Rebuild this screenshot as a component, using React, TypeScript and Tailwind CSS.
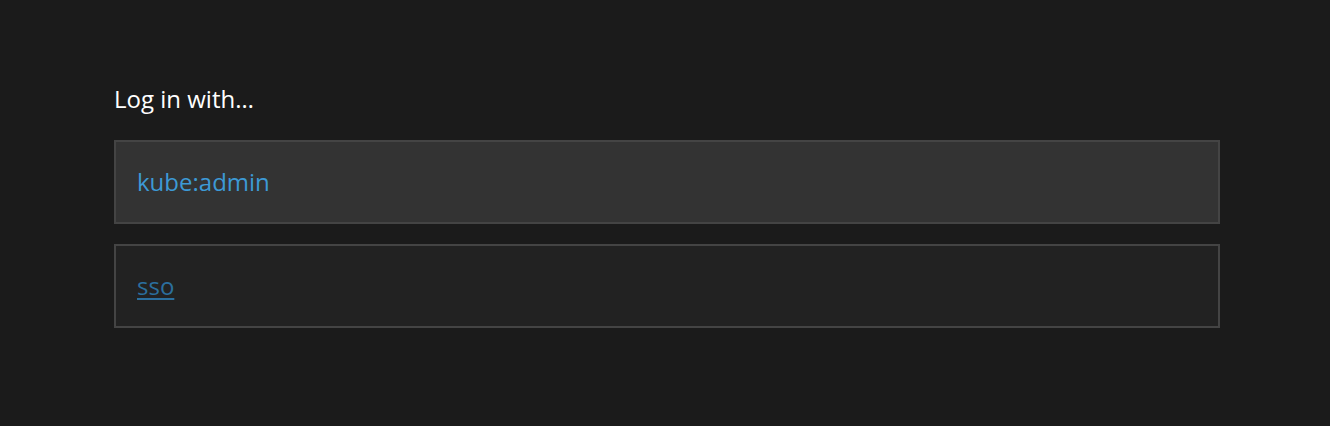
export default function App() {
  return (
    <div className="min-h-[426px] w-full bg-[#1b1b1b] font-['Open_Sans',sans-serif]">
      <div className="ml-[114px] w-[1106px] pt-[82px]">
        <h2 className="mb-[24px] text-[24px] leading-[34px] font-normal text-white">Log in with…</h2>
        <ul className="flex flex-col gap-[20px]">
          <li className="flex h-[84px] items-center border-2 border-[#444444] bg-[#333333] px-[21px]">
            <a href="#" className="text-[24px] leading-[34px] text-[#3d9ad6]">
              kube:admin
            </a>
          </li>
          <li className="flex h-[84px] items-center border-2 border-[#444444] bg-[#222222] px-[21px]">
            <a
              href="#"
              className="text-[24px] leading-[34px] text-[#2b6f9e] underline decoration-2 underline-offset-[3px]"
            >
              sso
            </a>
          </li>
        </ul>
      </div>
    </div>
  );
}
